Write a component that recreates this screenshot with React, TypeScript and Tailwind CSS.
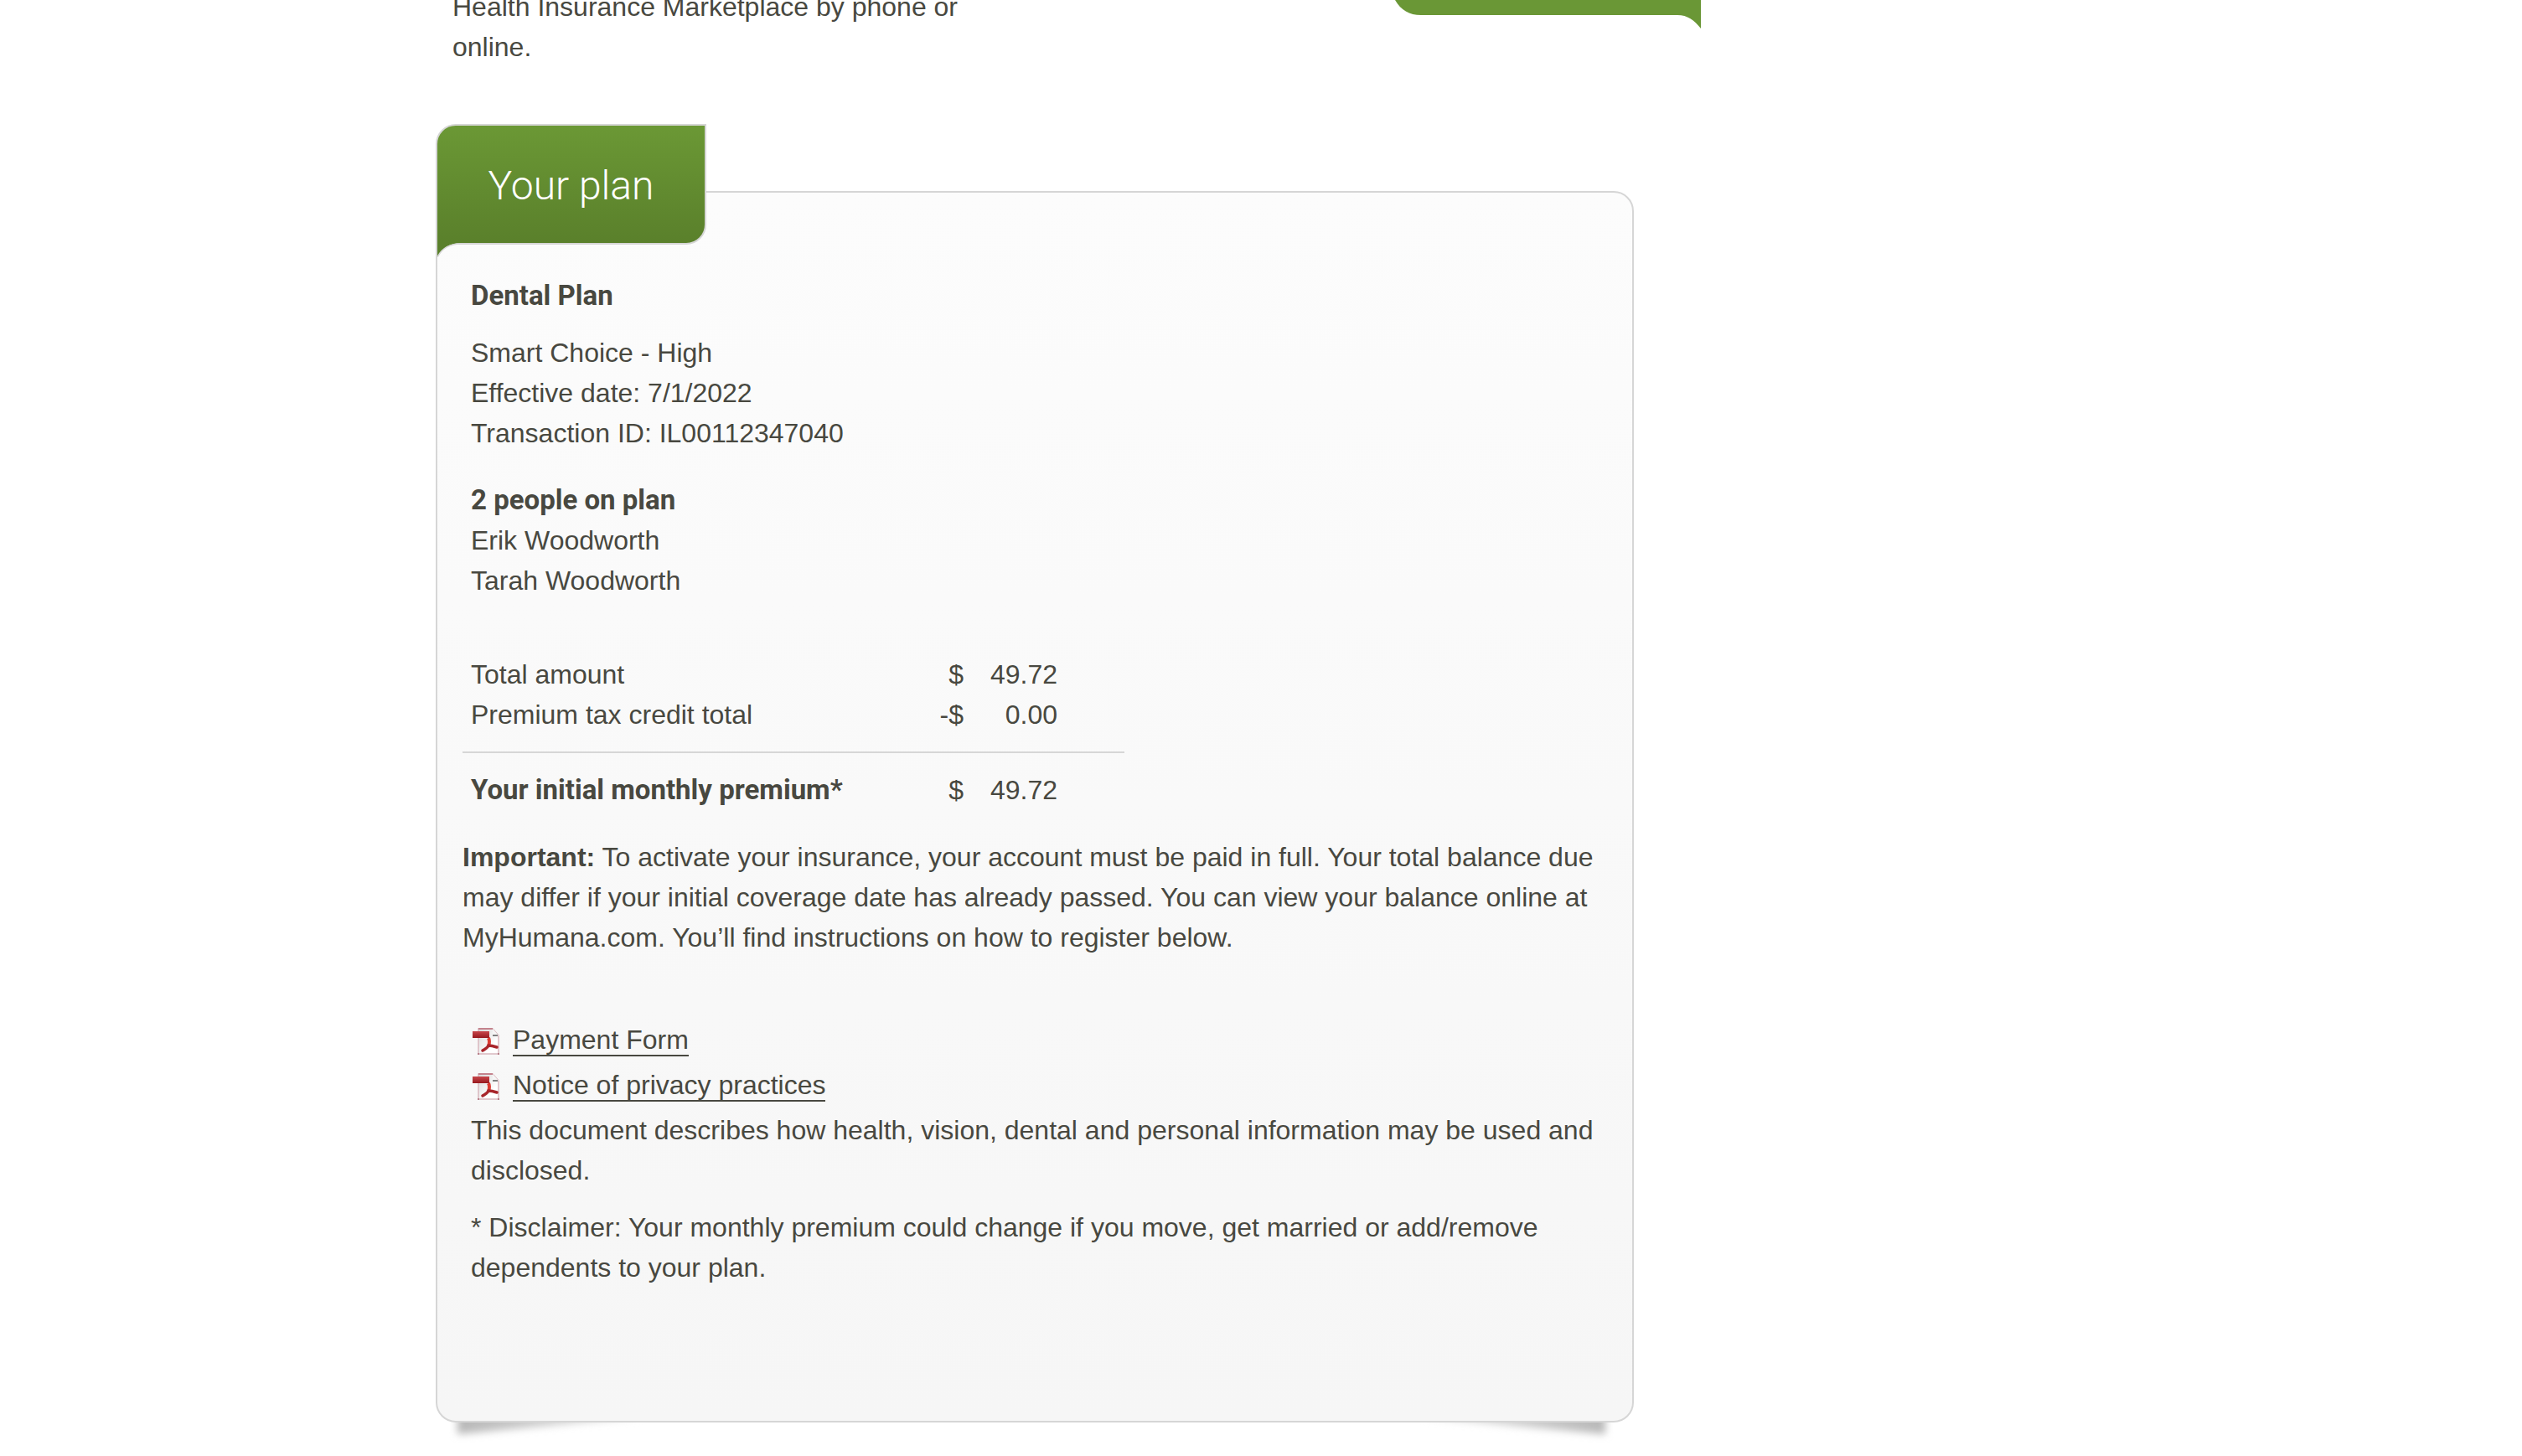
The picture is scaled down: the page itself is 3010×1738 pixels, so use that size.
const heading = "font-['Roboto',sans-serif] text-[33px] leading-[48px] font-bold";

function PdfIcon() {
  return (
    <svg viewBox="0 0 32 32" className="size-8 shrink-0" aria-hidden="true">
      <defs>
        <linearGradient id="pdfBar" x1="0" y1="0" x2="0" y2="1">
          <stop offset="0" stopColor="#c8474b" />
          <stop offset="1" stopColor="#98191f" />
        </linearGradient>
        <linearGradient id="pdfPage" x1="0" y1="0" x2="1" y2="1">
          <stop offset="0" stopColor="#d8d8d8" />
          <stop offset="0.7" stopColor="#ffffff" />
        </linearGradient>
      </defs>
      <path d="M7 1H24L31 9V31H7Z" fill="url(#pdfPage)" stroke="#d9b8be" strokeWidth="1.5" />
      <path d="M7 1H24" stroke="#c4838d" strokeWidth="2" />
      <path d="M24 1V9H31Z" fill="#f6f6f6" />
      <path d="M24 9H30" stroke="#808080" strokeWidth="2" />
      <path d="M6 30H8V32H6ZM30 30H32V32H30Z" fill="#b8808a" />
      <rect x="0" y="4" width="20" height="8" fill="url(#pdfBar)" />
      <path d="M19 12C21 16 20 19 19 22" fill="none" stroke="#dc3b32" strokeWidth="4" />
      <path d="M12 27C15 25 18 24 19 21C22 21 26 22 29 23" fill="none" stroke="#a8252b" strokeWidth="3.5" strokeLinecap="round" />
    </svg>
  );
}

function PdfLink({ label }: { label: string }) {
  return (
    <li className="flex h-[54px] items-start gap-4 pl-0.5">
      <span className="flex pt-2.5">
        <PdfIcon />
      </span>
      <a href="#" className="h-11 border-b-2 border-[#484840] pt-[3px] leading-[42px]">
        {label}
      </a>
    </li>
  );
}

function CornerShadow({ flip = false }: { flip?: boolean }) {
  return (
    <svg
      viewBox="0 0 280 50"
      className={flip ? "h-[50px] w-[280px] -scale-x-100" : "h-[50px] w-[280px]"}
      aria-hidden="true"
    >
      <defs>
        <filter id="soften" x="-10%" y="-50%" width="120%" height="200%">
          <feGaussianBlur stdDeviation="5" />
        </filter>
        <linearGradient id="fade" x1="0" y1="0" x2="1" y2="0">
          <stop offset="0" stopColor="#b8b8b8" />
          <stop offset="1" stopColor="#e4e4e4" />
        </linearGradient>
      </defs>
      <path d="M26 0V30L240 10V0Z" fill="url(#fade)" filter="url(#soften)" />
    </svg>
  );
}

const totals = [
  { label: "Total amount", sign: "$", value: "49.72" },
  { label: "Premium tax credit total", sign: "-$", value: "0.00" },
];

export default function App() {
  return (
    <div className="min-h-screen overflow-hidden bg-white font-['Liberation_Sans',Arial,sans-serif] text-[32px] leading-[48px] text-[#484840]">
      <main className="mx-auto w-full max-w-[1970px]">
        <header className="flex max-w-[1510px] items-start justify-between">
          <p className="-mt-4 max-w-[640px] pl-5">
            Health Insurance Marketplace by phone or online.
          </p>
          <svg viewBox="0 0 366 34" className="h-[34px] w-[366px] shrink-0" aria-hidden="true">
            <path d="M1 0C8 12 18 18 32 18H338C350 18 358 24 366 34V0Z" fill="#6a9736" />
          </svg>
        </header>

        <section className="relative isolate mt-[68px] max-w-[1430px]">
          <div className="relative z-10 w-[323px]">
            <h2 className="flex h-36 items-center justify-center rounded-tl-[24px] rounded-br-[24px] border-2 border-[#d6d6d6] bg-linear-to-b from-[#6b9835] to-[#5a802b] pt-1 font-['Roboto',sans-serif] text-[48px] font-light text-white">
              Your plan
            </h2>
            <svg viewBox="0 0 28 18" className="absolute top-[141px] left-0.5 h-[18px] w-7" aria-hidden="true">
              <path d="M0 0H28V1C14 1 5 8 0 18Z" fill="#5a802b" />
              <path d="M28 2C14 2 5 8 0 18" fill="none" stroke="#d6d6d6" strokeWidth="1.5" />
            </svg>
          </div>

          <div className="-mt-16 rounded-[24px] border-2 border-[#d6d6d6] bg-linear-to-b from-[#fcfcfc] to-[#f6f6f6] px-[30px] pt-[99px] pb-[159px]">
            <div className="px-2.5">
              <h3 className={heading}>Dental Plan</h3>
              <div className="mt-5">
                <p>Smart Choice - High</p>
                <p>Effective date: 7/1/2022</p>
                <p>Transaction ID: IL00112347040</p>
              </div>
              <h3 className={`mt-8 ${heading}`}>2 people on plan</h3>
              <ul>
                <li>Erik Woodworth</li>
                <li>Tarah Woodworth</li>
              </ul>
            </div>

            <table className="mt-16 w-full max-w-[790px] table-fixed border-separate border-spacing-0">
              <colgroup>
                <col />
                <col className="w-[100px]" />
                <col className="w-[112px]" />
                <col className="w-20" />
              </colgroup>
              <tbody>
                {totals.map((row, i) => {
                  const last = i === totals.length - 1;
                  const edge = last ? "border-b-2 border-[#d6d6d6] pb-5" : "";
                  return (
                    <tr key={row.label}>
                      <th scope="row" className={`pl-2.5 text-left font-normal ${edge}`}>{row.label}</th>
                      <td className={`text-right ${edge}`}>{row.sign}</td>
                      <td className={`text-right ${edge}`}>{row.value}</td>
                      <td className={edge} />
                    </tr>
                  );
                })}
                <tr>
                  <th scope="row" className={`pt-5 pl-2.5 text-left ${heading}`}>Your initial monthly premium*</th>
                  <td className="pt-5 text-right">$</td>
                  <td className="pt-5 text-right">49.72</td>
                  <td />
                </tr>
              </tbody>
            </table>

            <p className="mt-8">
              <strong className="font-bold">Important:</strong> To activate your insurance, your account must be paid in
              full. Your total balance due may differ if your initial coverage date has already passed. You can view
              your balance online at MyHumana.com. You’ll find instructions on how to register below.
            </p>

            <div className="mt-[74px] pl-2.5">
              <ul>
                <PdfLink label="Payment Form" />
                <PdfLink label="Notice of privacy practices" />
              </ul>
              <p>
                This document describes how health, vision, dental and personal information may be used and disclosed.
              </p>
              <p className="mt-5">
                * Disclaimer: Your monthly premium could change if you move, get married or add/remove dependents to
                your plan.
              </p>
            </div>
          </div>

          <div className="absolute inset-x-0 -bottom-[34px] -z-10 flex justify-between pr-2">
            <CornerShadow />
            <CornerShadow flip />
          </div>
        </section>
      </main>
    </div>
  );
}
